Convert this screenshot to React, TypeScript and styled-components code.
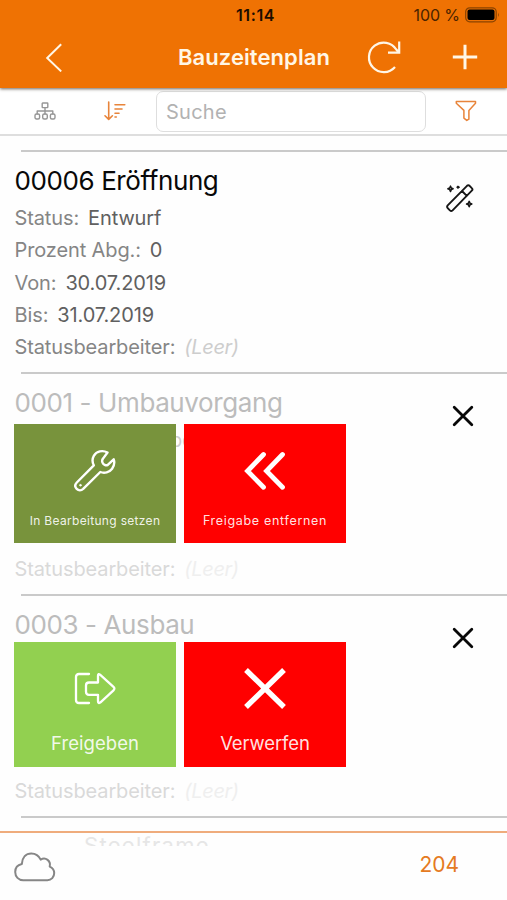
import React from "react";
import styled, { createGlobalStyle } from "styled-components";

const Global = createGlobalStyle`
  * { box-sizing: border-box; }
  html, body { margin: 0; padding: 0; background: #fff; }
  body { font-family: Inter, "Liberation Sans", sans-serif; overflow: hidden; }
`;

const Screen = styled.div`
  width: 507px;
  height: 900px;
  display: flex;
  flex-direction: column;
  background: #fefefe;
  overflow: hidden;
`;

const Header = styled.header`
  flex: none;
  height: 88px;
  background: #ef7203;
  box-shadow: 0 1px 3px rgba(60, 50, 40, 0.75);
  z-index: 2;
`;

const StatusBar = styled.div`
  height: 30px;
  display: grid;
  grid-template-columns: 1fr 60px 1fr;
  align-items: center;
  text-align: center;
  color: #1c0d00;
`;

const Clock = styled.span`
  grid-column: 2;
  padding-left: 4px;
  font-size: 16px;
  font-weight: 600;
  letter-spacing: 0.6px;
  white-space: nowrap;
`;

const Battery = styled.div`
  display: flex;
  align-items: center;
  justify-content: flex-end;
  gap: 5px;
  padding-right: 7px;
  font-size: 16px;
  letter-spacing: -0.1px;
  color: #4a2300;
`;

const NavBar = styled.div`
  height: 54px;
  display: grid;
  grid-template-columns: 108px 68px 156px 103px 60px;
  align-items: center;
  justify-items: center;
  color: #fff6e6;
`;

const Title = styled.h1`
  grid-column: 3;
  margin: 0;
  font-size: 22px;
  font-weight: 600;
  letter-spacing: 0.08px;
  white-space: nowrap;
`;

const Toolbar = styled.div`
  flex: none;
  height: 48px;
  display: grid;
  grid-template-columns: 90px 50px 16px 270px 80px;
  align-items: center;
  justify-items: center;
  border-bottom: 2px solid #dedede;
  background: #fff;
`;

const Search = styled.input`
  grid-column: 4;
  width: 270px;
  height: 41px;
  border: 1.5px solid #dedede;
  border-radius: 7px;
  padding: 1px 9px 0;
  background: #fff;
  font: 400 20px Inter, sans-serif;
  letter-spacing: 0.25px;
  outline: none;
  &::placeholder { color: #b2b2b2; opacity: 1; }
`;

const List = styled.main`
  flex: 1;
  min-height: 0;
  padding-top: 14px;
  overflow: hidden;
`;

const Item = styled.article`
  position: relative;
  height: 222px;
  padding: 15px 0 0 14.5px;
  &::before {
    content: "";
    position: absolute;
    left: 21px;
    right: 0;
    top: 0;
    height: 2px;
    background: #cacaca;
  }
`;

const Body = styled.div<{ $dim?: boolean }>`
  opacity: ${(p) => (p.$dim ? 0.3 : 1)};
`;

const Heading = styled.h2<{ $dim?: boolean }>`
  margin: 0;
  height: 35px;
  line-height: 32px;
  font-size: 26px;
  font-weight: 400;
  letter-spacing: -0.4px;
  color: ${(p) => (p.$dim ? "#bcbcbc" : "#080808")};
  white-space: nowrap;
`;

const Field = styled.div`
  display: flex;
  gap: 9px;
  height: 32.3px;
  line-height: 36px;
  font-size: 20px;
  letter-spacing: -0.12px;
  color: #858585;
  white-space: nowrap;
`;

const Value = styled.span<{ $empty?: boolean }>`
  color: ${(p) => (p.$empty ? "#cdcdcd" : "#606060")};
  font-style: ${(p) => (p.$empty ? "italic" : "normal")};
  letter-spacing: ${(p) => (p.$empty ? -0.35 : -0.12)}px;
`;

const ItemIcon = styled.div<{ $top: number; $left: number }>`
  position: absolute;
  top: ${(p) => p.$top}px;
  left: ${(p) => p.$left}px;
  display: flex;
`;

const Actions = styled.div<{ $top: number; $height: number }>`
  position: absolute;
  top: ${(p) => p.$top}px;
  left: 14px;
  height: ${(p) => p.$height}px;
  display: flex;
  gap: 8px;
`;

const Action = styled.button<{ $color: string }>`
  width: 162px;
  height: 100%;
  border: 0;
  padding: 22px 0 0;
  display: flex;
  flex-direction: column;
  align-items: center;
  gap: 19px;
  background: ${(p) => p.$color};
  color: #fff;
  white-space: nowrap;
`;

const ActionLabel = styled.span<{ $size: number; $track: number }>`
  font: 400 ${(p) => p.$size}px / 16px Inter, sans-serif;
  letter-spacing: ${(p) => p.$track}px;
  line-height: ${(p) => (p.$size < 15 ? 16 : 24)}px;
  color: rgba(255, 255, 255, 0.9);
`;

const Footer = styled.footer`
  flex: none;
  position: relative;
  height: 69px;
  display: flex;
  align-items: center;
  justify-content: space-between;
  padding: 0 48px 0 14px;
  border-top: 2px solid #efac7c;
  background: #fefefe;
`;

const Peek = styled.div`
  position: absolute;
  left: 84px;
  top: 0;
  height: 13px;
  overflow: hidden;
  font-size: 22px;
  line-height: 24px;
  letter-spacing: 1.3px;
  color: #e6e6e6;
`;

const Count = styled.span`
  padding-bottom: 4px;
  font-size: 21px;
  letter-spacing: 0px;
  color: #e57a22;
`;

const line = { fill: "none", stroke: "currentColor", strokeLinecap: "round", strokeLinejoin: "round" } as const;

const BatteryIcon = () => (
  <svg width="35" height="16" viewBox="0 0 35 16">
    <rect x=".7" y=".8" width="30.5" height="14" rx="4" fill="none" stroke="#8a4300" strokeWidth="1.2" />
    <rect x="2.5" y="2.6" width="27" height="10.4" rx="2" fill="#000" />
    <path d="M33 5.5q1.6 2.3 0 4.6z" fill="#8a4300" />
  </svg>
);

const BackIcon = () => (
  <svg width="18" height="30" viewBox="0 0 18 30" {...line} strokeWidth="2" strokeLinecap="butt" strokeLinejoin="miter">
    <path d="M16.2 2.3 2.2 16l14 13.4" />
  </svg>
);

const ReloadIcon = () => (
  <svg width="34" height="34" viewBox="0 0 34 34" {...line} strokeWidth="2.2" strokeLinecap="butt" strokeLinejoin="miter">
    <path d="M28 27A14.8 14.8 0 1 1 29.3 9.5L32 12.3M32.2 1.6v11.1H21" />
  </svg>
);

const PlusIcon = () => (
  <svg width="26" height="26" viewBox="0 0 26 26" {...line} strokeWidth="3" strokeLinecap="butt">
    <path d="M13 .8v24.4M.8 13h24.4" />
  </svg>
);

const TreeIcon = () => (
  <svg width="22" height="18" viewBox="0 0 22 18" {...line} strokeWidth="1.4" color="#969696">
    <rect x="8.2" y="1" width="5.6" height="4.6" rx=".5" />
    <path d="M11 5.6V12M3.2 12V9h15.6v3" />
    <rect x="1" y="12" width="4.6" height="5" rx="1.5" />
    <rect x="8.7" y="12" width="4.6" height="5" rx="1.5" />
    <rect x="16.4" y="12" width="4.6" height="5" rx="1.5" />
  </svg>
);

const SortIcon = () => (
  <svg width="22" height="20" viewBox="0 0 22 20" {...line} strokeWidth="1.6" color="#e8843a">
    <path d="M4.7 1v17M1 14.8 4.7 18.4 8.4 14.8M11 3.7h9.8M11 8h7M11 12.2h4M11 16h1.3" />
  </svg>
);

const FilterIcon = () => (
  <svg width="22" height="22" viewBox="0 0 22 22" {...line} strokeWidth="1.5" color="#e8843a">
    <path d="M1.3 1.5h19.2v1.7l-6.6 7.2v8.8l-2.1 1.2-2.9-2.3v-7.7L1.3 3.2z" />
  </svg>
);

const WandIcon = () => (
  <svg width="28" height="28" viewBox="0 0 28 28" {...line} strokeWidth="1.9" color="#161616">
    <path d="M1.7 21.4 21 1.8q1.3-1.2 2.6 0l2.2 2.3q1.3 1.3 0 2.6L6.6 26.4q-1.4 1.2-2.7 0l-2.2-2.3q-1.2-1.3 0-2.7zM16 7l4.8 4.9" />
    <path d="M4.5 2.2 5.3 4 7.1 4.8 5.3 5.6 4.5 7.4 3.7 5.6 1.9 4.8 3.7 4zM23.2 17.4l.8 1.8 1.8.8-1.8.8-.8 1.8-.8-1.8-1.8-.8 1.8-.8z" strokeWidth="1.6" />
    <circle cx="12" cy="3.2" r="1.1" fill="currentColor" strokeWidth="1" />
  </svg>
);

const CloseIcon = () => (
  <svg width="22" height="22" viewBox="0 0 22 22" {...line} strokeWidth="2.8" color="#080808">
    <path d="m2.2 2.2 17.6 17.6M19.8 2.2 2.2 19.8" />
  </svg>
);

const WrenchIcon = () => (
  <svg width="42" height="48" viewBox="0 0 42 48" {...line} strokeWidth="2.4">
    <path d="M33.5 6.5C28.5 3.8 22.5 5.2 19.8 9.8c-1.8 3.2-1.8 6 0 9.5L2.8 36.5c-1.9 2-1.9 4.6-.1 6.4s4.5 1.8 6.5 0L26.3 26c4.1 1.6 9.1.4 11.8-3.3 2-2.8 2.7-6.3 1.6-9.4l-6.2 5.8c-1.6.6-4.2-.5-5-2.5-.6-1.4-.4-3 .7-4.2z" />
    <circle cx="6.4" cy="39.2" r=".8" fill="currentColor" strokeWidth="1" />
  </svg>
);

const RewindIcon = () => (
  <svg width="42" height="48" viewBox="0 0 42 48" {...line} strokeWidth="4.8" strokeLinejoin="miter">
    <path d="M19.5 8.5 3.5 25l16 16.3M38.5 8.5 22.5 25l16 16.3" />
  </svg>
);

const ReleaseIcon = () => (
  <svg width="42" height="48" viewBox="0 0 42 48" {...line} strokeWidth="2.3">
    <path d="M15 10H5q-3 0-3 3v23q0 3 3 3h10" />
    <path d="M15 18.5h9v-6.8q0-2.8 2.3-.8l13.2 12q1.8 1.7 0 3.4l-13 12q-2.5 1.8-2.5-1v-6.5h-9q-3 0-3-3v-6.3q0-3 3-3z" />
  </svg>
);

const DiscardIcon = () => (
  <svg width="42" height="48" viewBox="0 0 42 48" {...line} strokeWidth="5.4" strokeLinecap="butt">
    <path d="m2 6 38 37M40 6 2 43" />
  </svg>
);

const CloudIcon = () => (
  <svg width="42" height="30" viewBox="0 0 42 30" {...line} strokeWidth="2" color="#868686">
    <path d="M9.2 28.2c-4.7 0-8-3.6-8-8.1 0-4.2 2.8-7.2 6.6-8C8.2 5.4 12 1.4 17.3 1.4c4.3 0 7.6 2.3 9.4 6.2 4.9-3 10.5 1.4 9 7 3 1.3 4.5 3.7 4.5 6.5 0 4-2.8 7.1-6.8 7.1z" />
  </svg>
);

interface EntryProps {
  title: string;
  status: string;
  dim?: boolean;
  children?: React.ReactNode;
}

const Entry = ({ title, status, dim, children }: EntryProps) => {
  const fields: [string, string][] = [
    ["Status:", status],
    ["Prozent Abg.:", "0"],
    ["Von:", "30.07.2019"],
    ["Bis:", "31.07.2019"],
    ["Statusbearbeiter:", ""],
  ];
  return (
    <Item>
      <Heading $dim={dim}>{title}</Heading>
      <Body $dim={dim}>
        {fields.map(([label, value], i) => (
          <Field key={label}>
            {(!dim || (i === 0 && status) || i === 4) && (
              <>
                <span>{label}</span>
                <Value $empty={!value}>{value || "(Leer)"}</Value>
              </>
            )}
          </Field>
        ))}
      </Body>
      {children}
    </Item>
  );
};

export default function App() {
  return (
    <Screen>
      <Global />
      <Header>
        <StatusBar>
          <Clock>11:14</Clock>
          <Battery>100 %<BatteryIcon /></Battery>
        </StatusBar>
        <NavBar>
          <BackIcon />
          <Title>Bauzeitenplan</Title>
          <ReloadIcon />
          <PlusIcon />
        </NavBar>
      </Header>
      <Toolbar>
        <TreeIcon />
        <SortIcon />
        <Search placeholder="Suche" />
        <FilterIcon />
      </Toolbar>
      <List>
        <Entry title="00006 Eröffnung" status="Entwurf">
          <ItemIcon $top={34} $left={446}><WandIcon /></ItemIcon>
        </Entry>
        <Entry title="0001 - Umbauvorgang" status="Freigegeben" dim>
          <ItemIcon $top={33} $left={452}><CloseIcon /></ItemIcon>
          <Actions $top={52} $height={119}>
            <Action $color="#78933c">
              <WrenchIcon />
              <ActionLabel $size={12} $track={0.32}>In Bearbeitung setzen</ActionLabel>
            </Action>
            <Action $color="#ff0000">
              <RewindIcon />
              <ActionLabel $size={12.5} $track={0.68}>Freigabe entfernen</ActionLabel>
            </Action>
          </Actions>
        </Entry>
        <Entry title="0003 - Ausbau" status="" dim>
          <ItemIcon $top={33} $left={452}><CloseIcon /></ItemIcon>
          <Actions $top={48} $height={125}>
            <Action $color="#92d050">
              <ReleaseIcon />
              <ActionLabel $size={18.5} $track={0.05}>Freigeben</ActionLabel>
            </Action>
            <Action $color="#ff0000">
              <DiscardIcon />
              <ActionLabel $size={18.5} $track={-0.1}>Verwerfen</ActionLabel>
            </Action>
          </Actions>
        </Entry>
        <Item />
      </List>
      <Footer>
        <Peek>Steelframe</Peek>
        <CloudIcon />
        <Count>204</Count>
      </Footer>
    </Screen>
  );
}
